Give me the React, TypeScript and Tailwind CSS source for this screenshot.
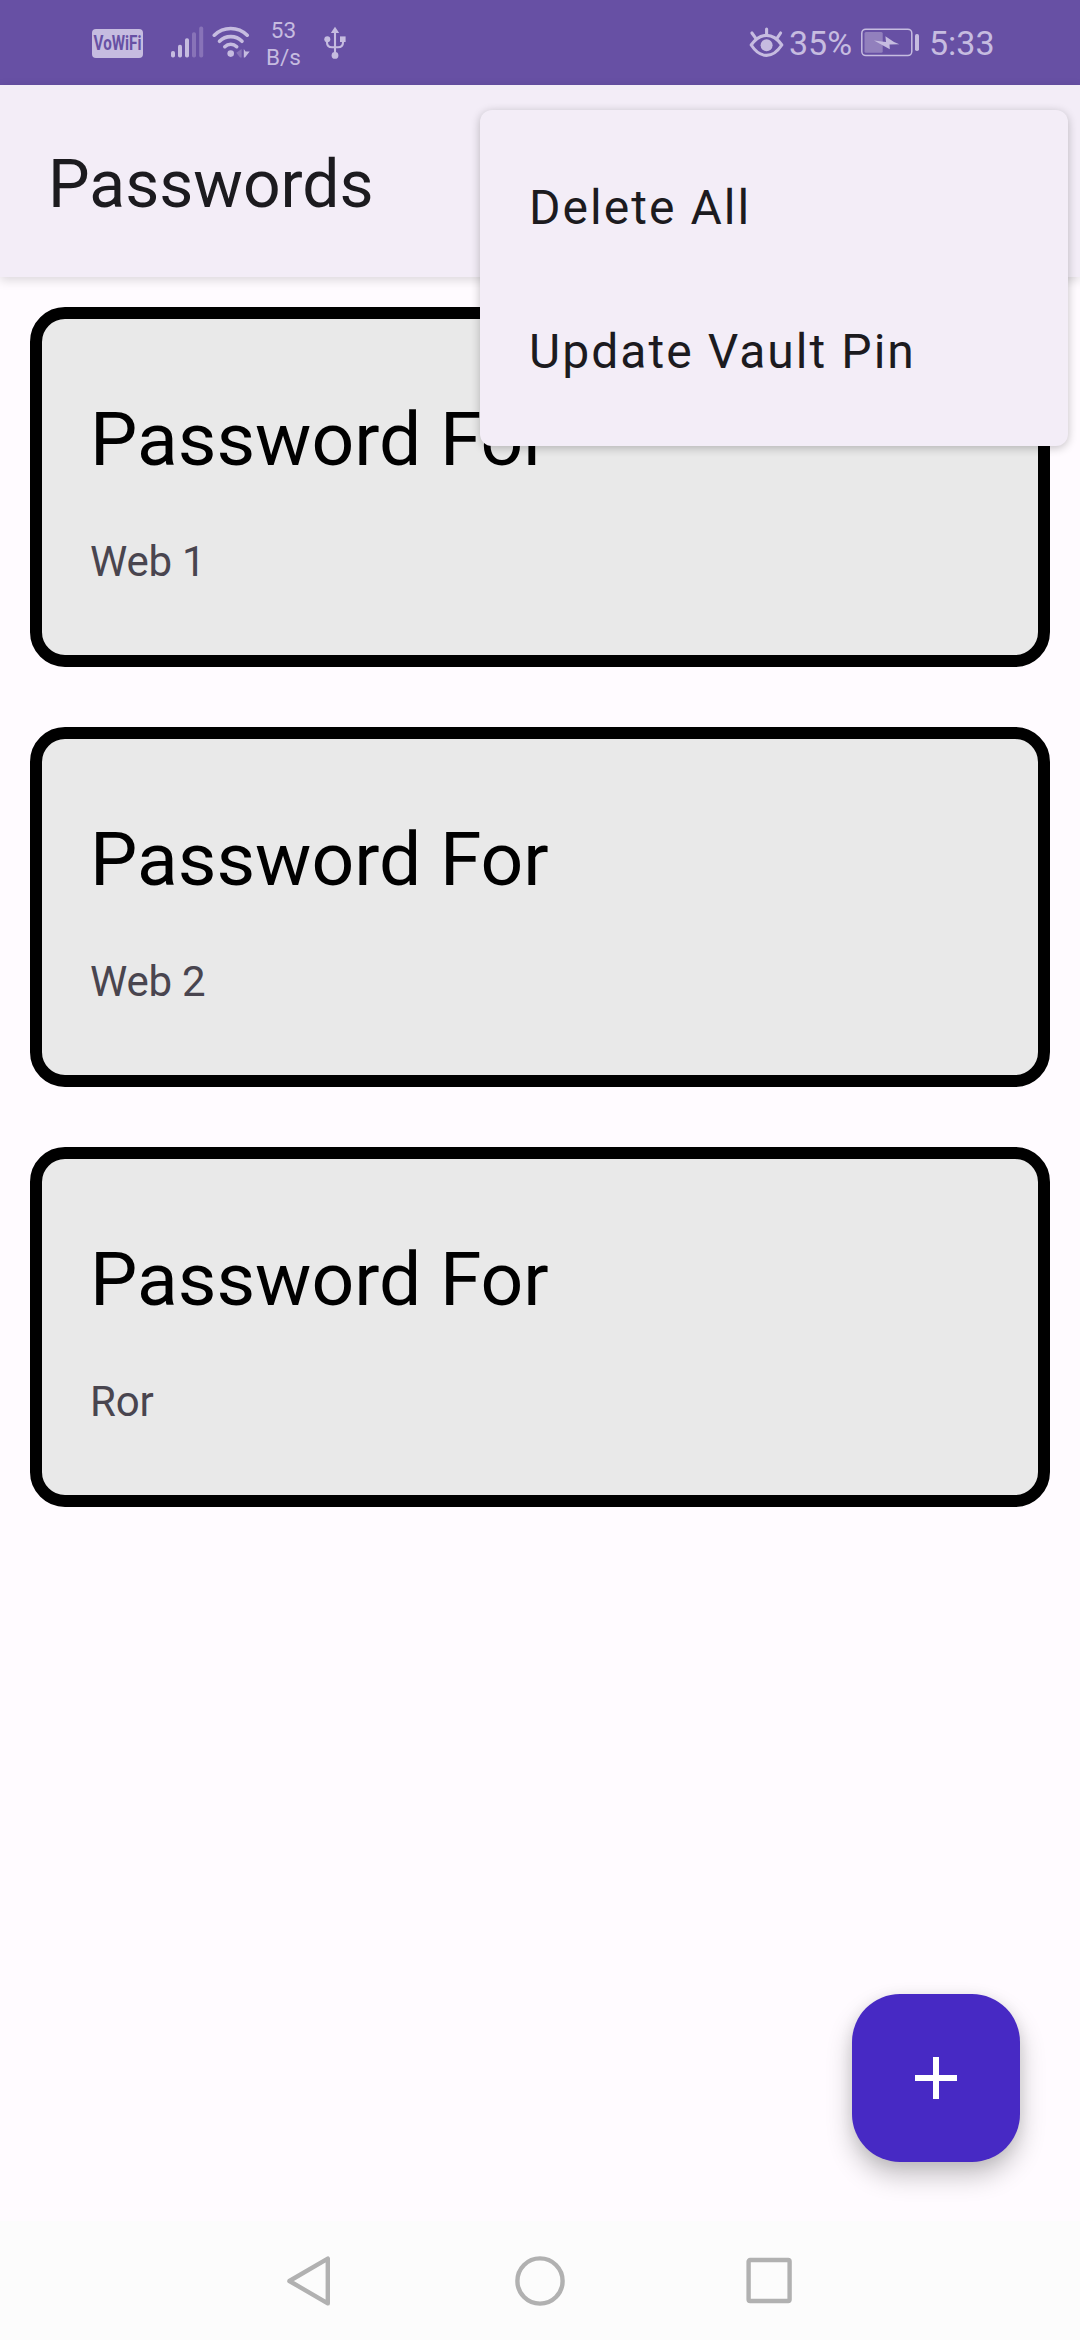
const entries = ["Web 1", "Web 2", "Ror"];
const menuItems = ["Delete All", "Update Vault Pin"];

function VoWifiBadge() {
  return (
    <div className="ml-[92px] mt-[1px] flex h-[29px] w-[51px] shrink-0 items-center justify-center rounded-[4px] bg-[#c6bce0]">
      <span className="scale-x-[0.76] text-[20px] leading-[28px] font-bold whitespace-nowrap text-[#6750a4]">
        VoWiFi
      </span>
    </div>
  );
}

function SignalIcon() {
  return (
    <svg className="ml-[28px] shrink-0" width="33" height="85" viewBox="171 0 33 85">
      <g fill="#c6bce0">
        <rect x="171" y="51" width="4" height="6.5" rx="1.8" />
        <rect x="178" y="44.7" width="4" height="12.8" rx="1.8" />
        <rect x="185" y="38.3" width="4" height="19.2" rx="1.8" />
      </g>
      <g fill="#8873b8">
        <rect x="192" y="32.2" width="4" height="25.3" rx="1.8" />
        <rect x="199.2" y="26.6" width="4" height="30.9" rx="1.8" />
      </g>
    </svg>
  );
}

function WifiIcon() {
  return (
    <svg className="ml-[8px] shrink-0" width="38" height="85" viewBox="212 0 38 85">
      <g fill="none" stroke="#c6bce0" strokeWidth="3.6" strokeLinecap="round">
        <path d="M214.3 35.2 A23.5 23.5 0 0 1 247.2 35.2" />
        <path d="M219.5 41.3 A15.8 15.8 0 0 1 242 41.3" />
        <path d="M224.8 46.7 A8.6 8.6 0 0 1 236.7 46.7" />
      </g>
      <circle cx="230.7" cy="53.6" r="3.3" fill="#c6bce0" />
      <path d="M241.6 49 V57.5 H240 L236.3 52.8 Z" fill="#8873b8" />
      <path d="M243.8 49 L245.6 51.5 H249.7 L245 57.5 H243.8 Z" fill="#c6bce0" />
    </svg>
  );
}

function UsbIcon() {
  return (
    <svg className="ml-[22px] shrink-0" width="24" height="85" viewBox="322 0 24 85">
      <g fill="none" stroke="#c6bce0" strokeWidth="2.1">
        <path d="M334 31 V55" />
        <path d="M326 40 V42.5 Q326 47.2 331 47.2 H337 Q342 47.2 342 42.5 V40" />
      </g>
      <g fill="#c6bce0">
        <path d="M334 26.8 L338.2 33 H329.8 Z" />
        <circle cx="326.3" cy="39.2" r="3" />
        <rect x="339" y="36.4" width="5.6" height="5.6" />
        <circle cx="334" cy="55.4" r="3.4" />
      </g>
    </svg>
  );
}

function EyeIcon() {
  return (
    <svg className="shrink-0" width="36" height="85" viewBox="748 0 36 85">
      <g fill="none" stroke="#c6bce0" strokeWidth="3.1" strokeLinecap="round" strokeLinejoin="round">
        <path d="M750.2 45 Q757 35.4 765.5 35.4 Q774 35.4 780.8 45 Q774 55.4 765.5 55.4 Q757 55.4 750.2 45 Z" />
        <path d="M765.6 29 V34.5" />
        <path d="M750.9 33 L755 38.6" />
        <path d="M779.6 33 L775.8 38.6" />
      </g>
      <circle cx="765.6" cy="45.2" r="6" fill="#c6bce0" />
    </svg>
  );
}

function BatteryIcon() {
  return (
    <svg className="shrink-0" width="60" height="85" viewBox="859 0 60 85">
      <rect x="860.8" y="29.2" width="50" height="26.4" rx="4" fill="none" stroke="#c6bce0" strokeWidth="1.5" />
      <rect x="863.5" y="32" width="18.2" height="20.8" rx="1.5" fill="#9280bd" />
      <path d="M873 40.5 L885 42 L884.4 36.3 L893 42 L898.3 44.2 L888.5 44.4 L888.8 49.2 Z" fill="#c6bce0" />
      <rect x="914" y="34" width="4" height="17" rx="1.8" fill="#c6bce0" />
    </svg>
  );
}

function StatusBar() {
  return (
    <div className="flex h-[85px] shrink-0 items-center bg-[#6750a4] text-[#c6bce0]">
      <VoWifiBadge />
      <SignalIcon />
      <WifiIcon />
      <div className="ml-[16px] flex w-[35px] flex-col items-center pt-[3px] text-[22.5px] leading-[27px]">
        <span>53</span>
        <span>B/s</span>
      </div>
      <UsbIcon />
      <div className="ml-auto flex items-center pr-[86px]">
        <EyeIcon />
        <span className="ml-[4px] w-[71px] text-[34px] leading-[40px] whitespace-nowrap">35%</span>
        <BatteryIcon />
        <span className="ml-[9px] w-[65px] text-[34px] leading-[40px] whitespace-nowrap">5:33</span>
      </div>
    </div>
  );
}

function PasswordCard({ name }: { name: string }) {
  return (
    <div className="h-[360px] rounded-[35px] border-12 border-black bg-[#e9e9e9] px-12 pt-[76px]">
      <h2 className="text-[75px] leading-[88px] text-black">Password For</h2>
      <p className="mt-[54px] text-[42px] leading-[50px] tracking-[-0.2px] text-[#49454f]">{name}</p>
    </div>
  );
}

function OverflowMenu() {
  return (
    <div className="absolute top-[110px] right-3 z-20 w-[588px] rounded-xl bg-[#f3edf7] py-6 shadow-[0_2px_10px_rgba(0,0,0,0.24)]">
      {menuItems.map((item) => (
        <div
          key={item}
          className="flex h-[144px] items-center pt-[3px] pr-12 pl-[49px] text-[48px] leading-[56px] tracking-[2.05px] text-[#1c1b1f]"
        >
          {item}
        </div>
      ))}
    </div>
  );
}

function NavBar() {
  return (
    <div className="flex h-[119px] shrink-0 items-center justify-center bg-[#fcfcfc]">
      <div className="flex w-[508px] items-center justify-between">
        <svg width="48" height="52" viewBox="0 0 48 52" fill="none" stroke="#b1b1b1" strokeWidth="4.4" strokeLinejoin="round">
          <path d="M3.4 26 L41.8 3.6 V48.4 Z" />
        </svg>
        <svg width="52" height="52" viewBox="0 0 52 52" fill="none" stroke="#b1b1b1" strokeWidth="4.4">
          <circle cx="26" cy="26" r="22.6" />
        </svg>
        <svg width="48" height="52" viewBox="0 0 48 52" fill="none" stroke="#b1b1b1" strokeWidth="4.4" strokeLinejoin="round">
          <rect x="2.6" y="5" width="41" height="41" rx="1.5" />
        </svg>
      </div>
    </div>
  );
}

export default function App() {
  return (
    <div className="relative flex h-[2340px] w-[1080px] flex-col overflow-hidden bg-[#fffbff] font-[Roboto,sans-serif]">
      <StatusBar />
      <header className="relative z-10 flex h-[192px] shrink-0 items-center bg-[#f3edf7] px-12 pt-[8px] shadow-[0_3px_10px_rgba(0,0,0,0.15)]">
        <h1 className="text-[66px] leading-[78px] text-[#1c1b1f]">Passwords</h1>
      </header>
      <main className="flex flex-1 flex-col gap-[60px] px-[30px] pt-[30px]">
        {entries.map((name) => (
          <PasswordCard key={name} name={name} />
        ))}
      </main>
      <NavBar />
      <OverflowMenu />
      <button
        aria-label="Add password"
        className="absolute top-[1994px] right-[60px] flex size-[168px] items-center justify-center rounded-[48px] bg-[#4729c4] shadow-[0_14px_26px_rgba(0,0,0,0.23),0_2px_14px_rgba(0,0,0,0.08)]"
      >
        <svg width="42" height="42" viewBox="0 0 42 42">
          <path d="M18 0 H24 V18 H42 V24 H24 V42 H18 V24 H0 V18 H18 Z" fill="#fff" />
        </svg>
      </button>
    </div>
  );
}
